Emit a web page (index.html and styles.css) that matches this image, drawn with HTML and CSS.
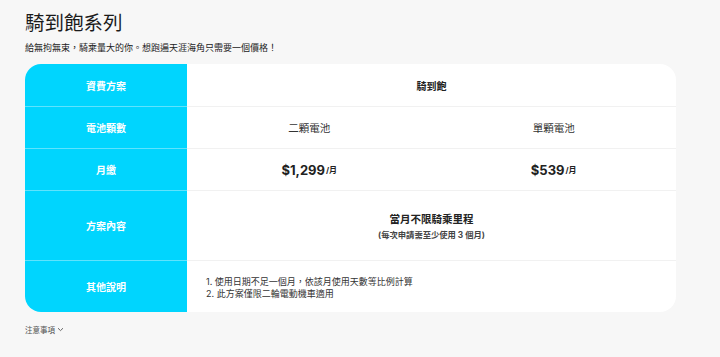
FILE: index.html
```html
<!DOCTYPE html>
<html lang="zh-Hant">
<head>
<meta charset="utf-8">
<link rel="stylesheet" href="styles.css">
</head>
<body>
<main class="page">
  <h1 class="title">騎到飽系列</h1>
  <p class="subtitle">給無拘無束，騎乘量大的你。想跑遍天涯海角只需要一個價格！</p>
  <div class="card">
    <div class="label r1">資費方案</div>
    <div class="cell span r1 bold">騎到飽</div>

    <div class="label r2">電池顆數</div>
    <div class="cell r2">二顆電池</div>
    <div class="cell r2">單顆電池</div>

    <div class="label r3">月繳</div>
    <div class="cell r3"><span class="price">$1,299</span><span class="unit">/月</span></div>
    <div class="cell r3"><span class="price">$539</span><span class="unit">/月</span></div>

    <div class="label r4">方案內容</div>
    <div class="cell span r4 stack">
      <span class="plan">當月不限騎乘里程</span>
      <span class="plan-note">(每次申請需至少使用 3 個月)</span>
    </div>

    <div class="label r5 last">其他說明</div>
    <div class="cell span r5 last notes">
      <ol class="note-list">
        <li>使用日期不足一個月，依該月使用天數等比例計算</li>
        <li>此方案僅限二輪電動機車適用</li>
      </ol>
    </div>
  </div>
  <button class="toggle">注意事項 <svg width="7" height="5" viewBox="0 0 7 5"><path d="M1 1.2 L3.5 3.6 L6 1.2" fill="none" stroke="#666" stroke-width="1"/></svg></button>
</main>
</body>
</html>
```
FILE: styles.css
```css
* { box-sizing: border-box; }
html, body { margin: 0; padding: 0; }
body {
  background: #f7f7f7;
  font-family: "Inter", "Noto Sans CJK TC", sans-serif;
  color: #222;
  width: 720px;
  height: 357px;
  overflow: hidden;
}
.page { padding: 10px 0 0 25px; }
.title {
  margin: 0;
  font-size: 19.5px;
  line-height: 26px;
  font-weight: 400;
  color: #1a1a1a;
}
.subtitle {
  margin: 5px 0 0;
  font-size: 9px;
  line-height: 13px;
  color: #222;
}
.card {
  margin-top: 10px;
  width: 651px;
  background: #fff;
  border-radius: 16px;
  overflow: hidden;
  display: grid;
  grid-template-columns: 162px 1fr 1fr;
  grid-template-rows: 43px 42px 42px 70px 51px;
}
.label {
  background: #00d5fe;
  color: #fff;
  font-weight: 700;
  font-size: 10px;
  display: flex;
  align-items: center;
  justify-content: center;
  border-bottom: 1px solid #5fe3fd;
}
.cell {
  display: flex;
  align-items: center;
  justify-content: center;
  font-size: 10.5px;
  color: #333;
  border-bottom: 1px solid #f1f1f1;
}
.last { border-bottom: none; }
.span { grid-column: 2 / 4; }
.bold { font-weight: 700; font-size: 10px; color: #222; }
.price { font-size: 13px; font-weight: 700; color: #222; }
.unit { font-size: 8px; font-weight: 700; margin-left: 1px; color: #222; }
.stack { flex-direction: column; gap: 2px; }
.plan { font-size: 10.5px; font-weight: 700; color: #222; }
.plan-note { font-size: 8.3px; font-weight: 700; color: #444; }
.notes { justify-content: flex-start; padding-top: 2px; }
.note-list {
  margin: 0;
  padding: 0 0 0 19px;
  list-style: none;
  counter-reset: n;
  font-size: 9px;
  line-height: 12px;
  color: #333;
}
.note-list li { counter-increment: n; }
.note-list li::before { content: counter(n) ". "; }
.toggle {
  margin-top: 12px;
  padding: 0;
  border: 0;
  background: none;
  font-family: inherit;
  font-size: 7.5px;
  color: #555;
  display: flex;
  align-items: center;
  gap: 2px;
}
```
